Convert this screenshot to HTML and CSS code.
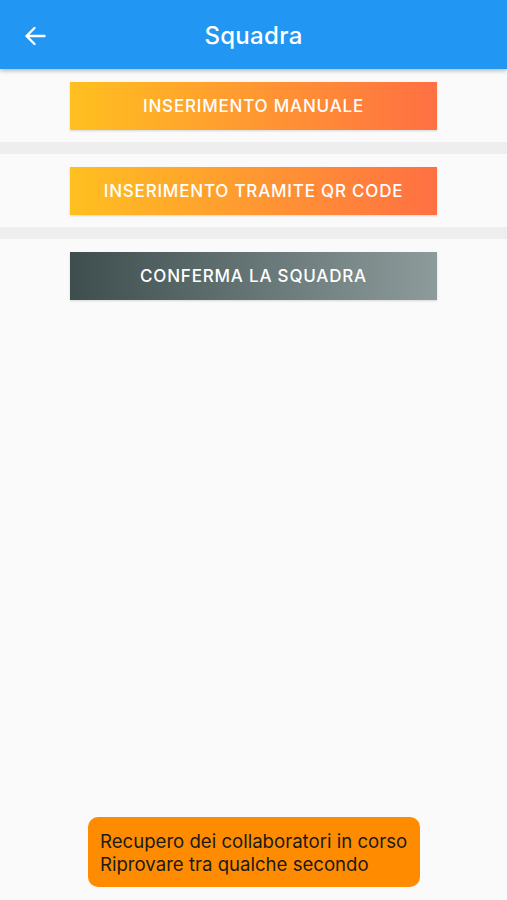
FILE: index.html
```html
<!DOCTYPE html>
<html lang="it">
<head>
<meta charset="utf-8">
<title>Squadra</title>
<link rel="stylesheet" href="styles.css">
</head>
<body>
<div class="screen">
  <header class="appbar">
    <button class="back" aria-label="Indietro">
      <svg width="22" height="20" viewBox="0 0 22 20"><path d="M20.5 10H2.5M10.5 2L2.5 10l8 8" fill="none" stroke="#fff" stroke-width="2.4" stroke-linecap="round" stroke-linejoin="round"/></svg>
    </button>
    <h1 class="title">Squadra</h1>
  </header>
  <main class="content">
    <section class="row">
      <button class="btn btn-orange">INSERIMENTO MANUALE</button>
    </section>
    <div class="sep"></div>
    <section class="row">
      <button class="btn btn-orange">INSERIMENTO TRAMITE QR CODE</button>
    </section>
    <div class="sep"></div>
    <section class="row">
      <button class="btn btn-dark">CONFERMA LA SQUADRA</button>
    </section>
  </main>
  <div class="toast">Recupero dei collaboratori in corso<br>Riprovare tra qualche secondo</div>
</div>
</body>
</html>
```
FILE: styles.css
```css
* { box-sizing: border-box; }
html, body { margin: 0; padding: 0; }
body {
  font-family: Inter, Roboto, sans-serif;
  background: #fafafa;
}
.screen {
  position: relative;
  width: 507px;
  height: 900px;
  overflow: hidden;
  background: #fafafa;
}
.appbar {
  position: relative;
  z-index: 2;
  height: 69px;
  background: #2196f3;
  display: flex;
  align-items: center;
  justify-content: center;
  box-shadow: 0 2px 4px rgba(0,0,0,0.25);
}
.back {
  position: absolute;
  left: 24px;
  top: 26px;
  padding: 0;
  border: 0;
  background: none;
  width: 22px;
  height: 20px;
  display: flex;
}
.title {
  margin: 0;
  color: #fff;
  font-size: 24px;
  font-weight: 500;
  letter-spacing: 0.3px;
  padding-top: 1px;
}
.content {
  display: flex;
  flex-direction: column;
}
.row {
  display: flex;
  justify-content: center;
  padding: 13px 0 12px;
}
.sep {
  height: 12px;
  background: #eeeeee;
}
.btn {
  width: 367px;
  height: 48px;
  border: 0;
  padding: 0;
  color: #fff;
  font-family: Inter, Roboto, sans-serif;
  font-size: 17px;
  font-weight: 500;
  letter-spacing: 0.8px;
  box-shadow: 0 1px 2px rgba(0,0,0,0.15);
}
.btn-orange {
  background: linear-gradient(to right, #ffc020, #ff7043);
}
.btn-dark {
  background: linear-gradient(to right, #3e4e4f, #8d9b9b);
}
.toast {
  position: absolute;
  left: 88px;
  top: 817px;
  width: 332px;
  height: 70px;
  background: #ff8c00;
  border-radius: 10px;
  padding: 13px 12px;
  color: #1a1a1a;
  font-size: 18.6px;
  line-height: 23px;
}
```
